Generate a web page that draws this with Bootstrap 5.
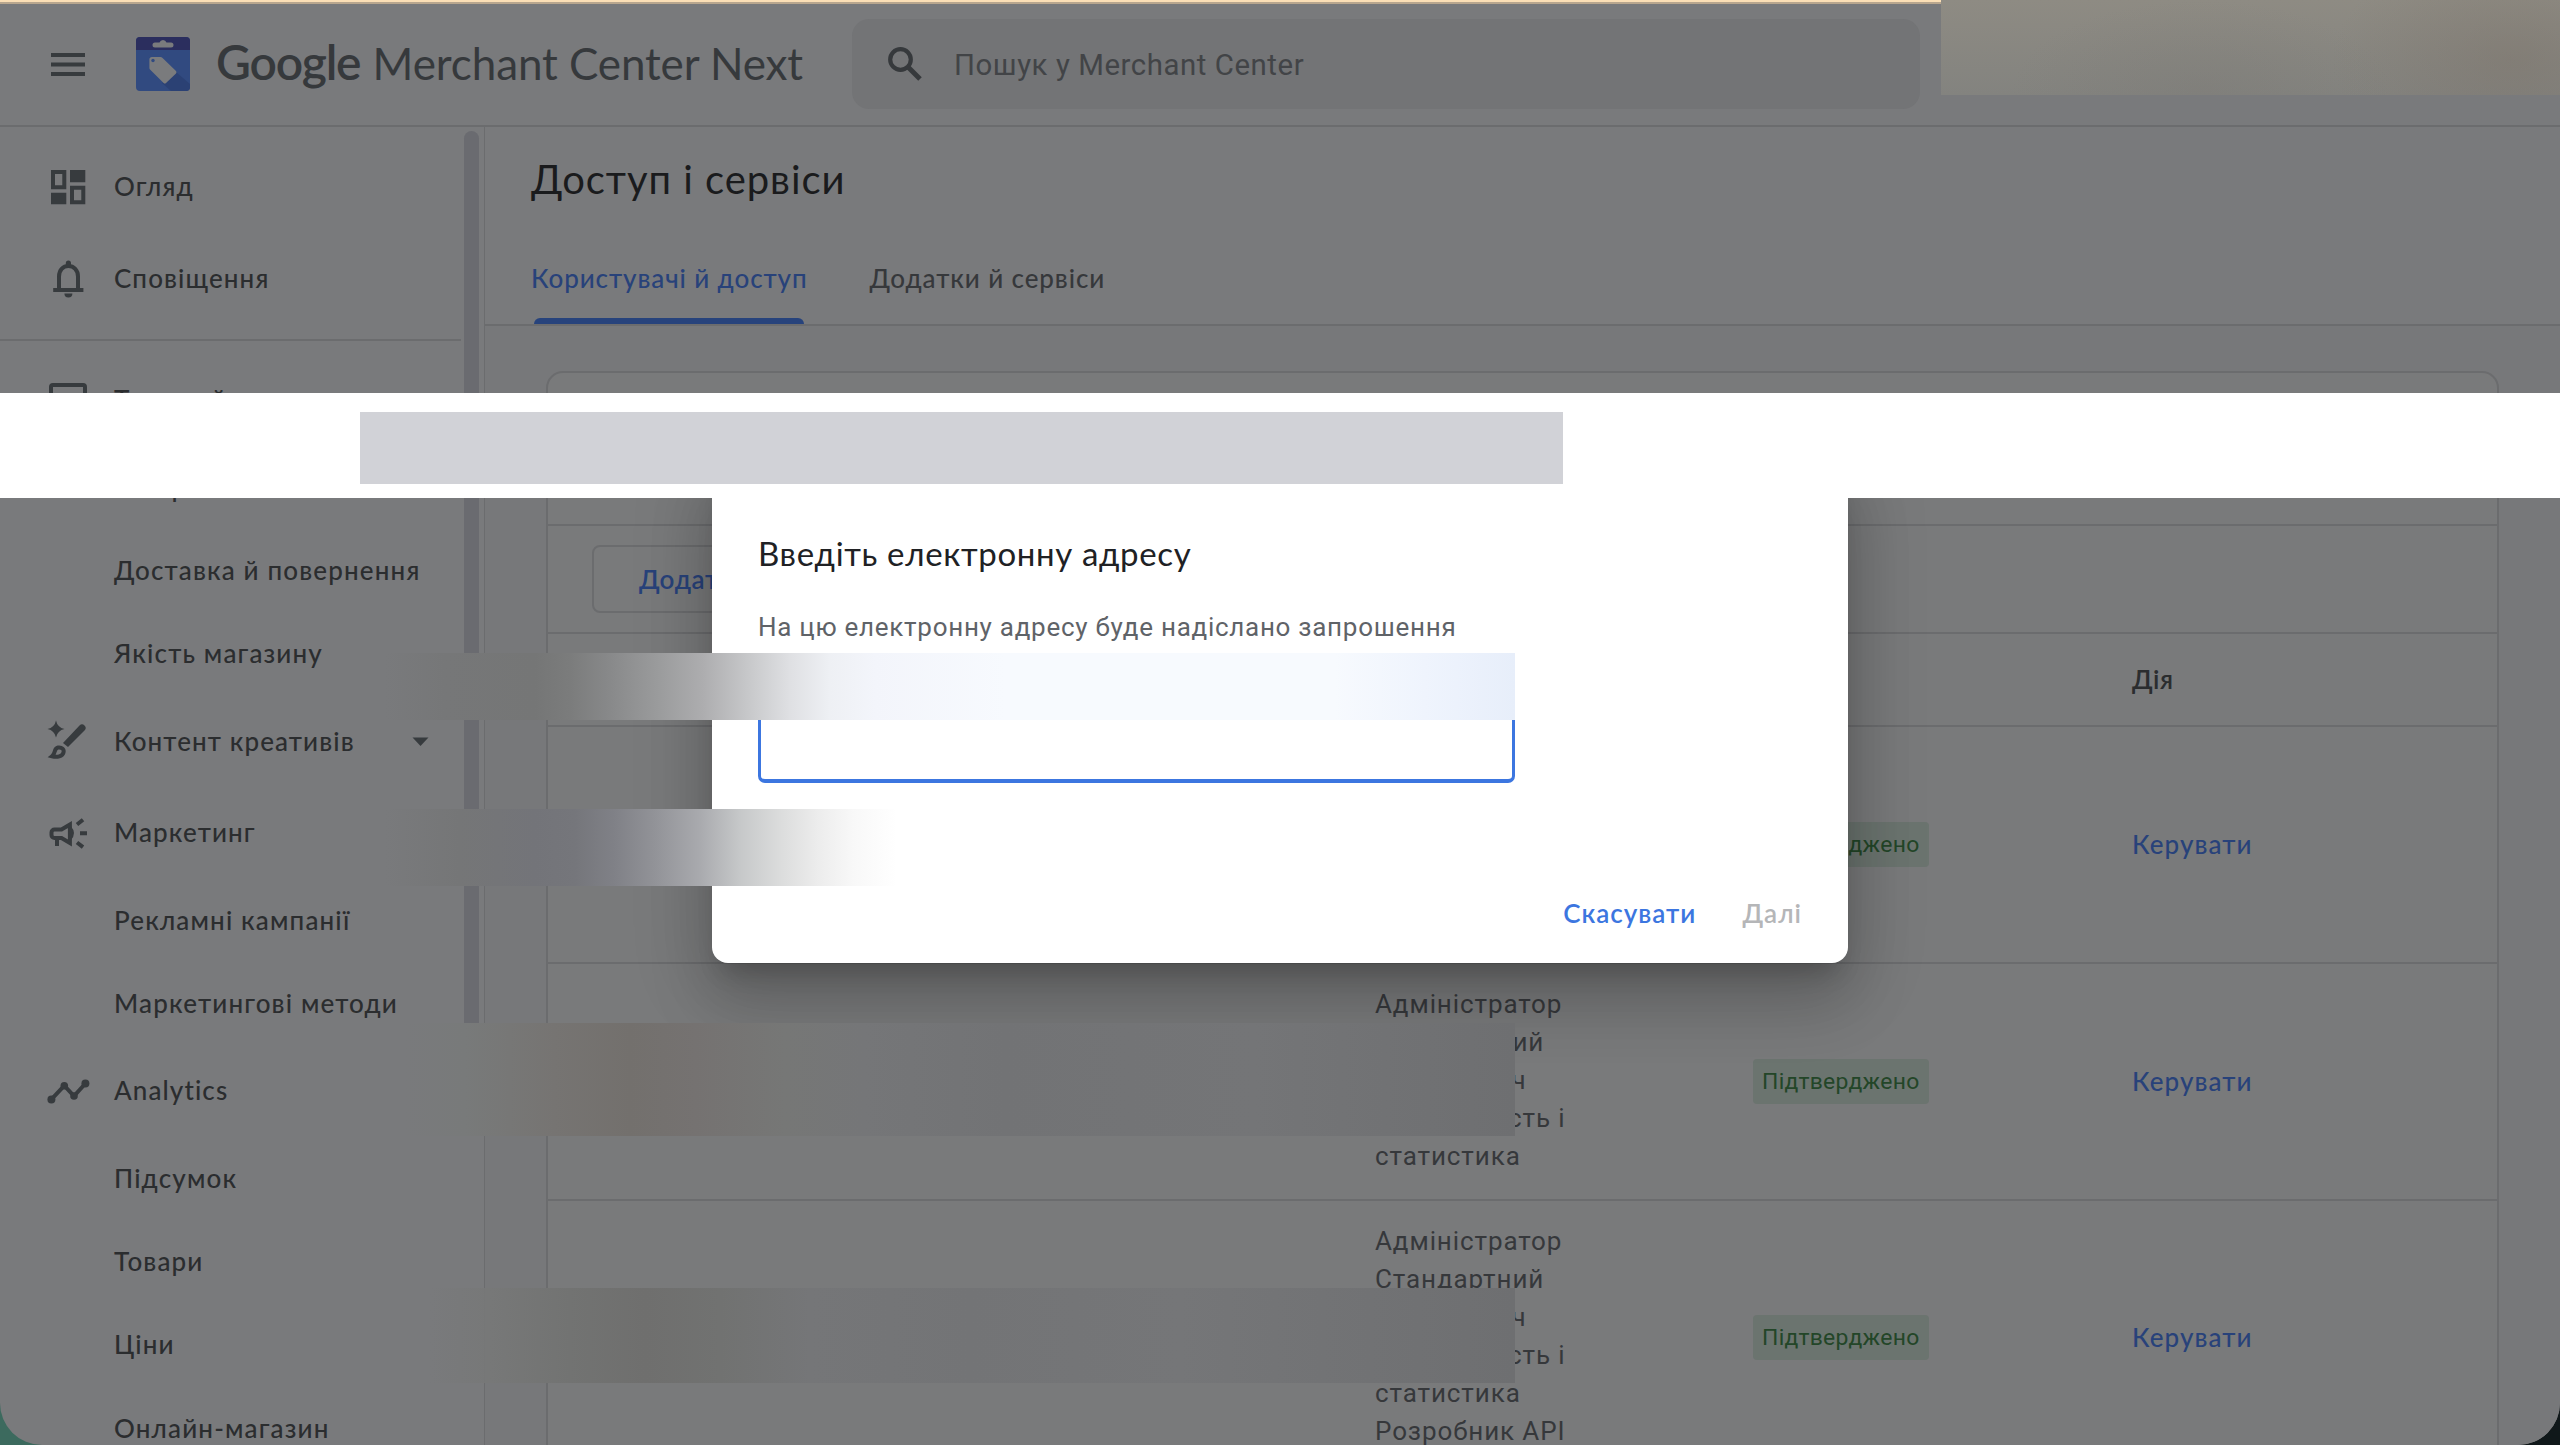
<!DOCTYPE html>
<html lang="uk">
<head>
<meta charset="utf-8">
<meta name="viewport" content="width=device-width, initial-scale=1">
<title>Merchant Center Next</title>
<link href="https://cdn.jsdelivr.net/npm/bootstrap@5.3.0/dist/css/bootstrap.min.css" rel="stylesheet">
<style>
  :root { --dim: #797a7c; --rule: #6b6c6e; --ink: #2b2d2f; --glyph: #373b3e; --blue: #28427a; }
  html, body { height: 1445px; overflow: hidden; }
  body { font-family: Lato, "Open Sans", sans-serif; font-size: 26px; color: var(--ink);
         background: linear-gradient(90deg, #3c6a5e 0, #3c6a5e 50%, #10181a 50%); }
  .app-window { width: 2560px; height: 1445px; background: var(--dim); border-radius: 0 0 42px 42px; }
  .roboto { font-family: Roboto, sans-serif; }

  .top-strip { height: 4px; background: linear-gradient(#fbdfb6 50%, #b8a68e 50%); }
  .app-header { height: 123px; border-bottom: 2px solid var(--rule); padding: 0 0 0 51px; }
  .wordmark { font-size: 44px; line-height: 1; color: #36393c; letter-spacing: -.1px; margin: 0 0 5px 26px; width: 636px; white-space: nowrap; }
  .wordmark b { font-size: 48px; font-weight: 600; letter-spacing: -1.2px; margin-right: 1px; }
  .search-box { width: 1068px; height: 90px; margin-bottom: 1px; border-radius: 17px; background: #737476; padding-left: 36px; color: #424447;
                font-size: 29.4px; letter-spacing: .55px; }
  .search-box span { padding-top: 2px; }

  .side { width: 485px; height: 1318px; border-right: 1.6px solid var(--rule); padding-top: 14.2px; }
  .side-item { height: 91.4px; padding-left: 46px; letter-spacing: 1.1px; font-weight: 500; }
  .side-item svg { width: 44px; height: 44px; margin-right: 24px; flex: none; }
  .side-sub { height: 83.4px; padding-left: 114px; letter-spacing: 1.15px; font-weight: 500; }
  .side-rule { width: 461px; height: 2px; background: var(--rule); margin: 15px 0 13px; }
  .side-scroll { left: 464px; top: 131px; width: 15px; height: 892px; border-radius: 8px 8px 0 0; background: #6a6b70; }
  .g-line { fill: none; stroke: var(--glyph); stroke-width: 4; }
  .g-fill { fill: var(--glyph); }

  .page-title { font-size: 40px; font-weight: 400; height: 103px; line-height: 105px; letter-spacing: .95px; color: #1a1b1d; padding-left: 46px; margin: 0; }
  .tab-row { height: 96px; padding-left: 46px; gap: 62px; border-bottom: 2px solid var(--rule); font-weight: 500; letter-spacing: .9px; color: #36383b; }
  .tab-row > div { line-height: 97px; height: 94px; position: relative; white-space: nowrap; }
  .tab-row .current { color: var(--blue); }
  .tab-row .current::after { content: ""; position: absolute; left: 3px; right: 4px; bottom: 0; height: 6px; border-radius: 6px 6px 0 0; background: #27437c; }
  .page-body { background: #77787a; padding: 45px 61px 0; height: 1122px; }
  .users-card { border: 2px solid var(--rule); border-radius: 17px; background: #797a7b; height: 1200px; }
  .card-top { height: 153px; border-bottom: 2px solid var(--rule); }
  .card-tools { height: 108px; border-bottom: 2px solid var(--rule); padding: 19px 0 0 44px; }
  .add-btn { height: 68px; border: 2px solid var(--rule); border-radius: 8px; color: #28427a; font-weight: 600; padding: 0 45px; letter-spacing: .6px; line-height: 64px; }
  .users-head { height: 93px; border-bottom: 2px solid var(--rule); font-weight: 600; letter-spacing: .6px; }
  .users-row { border-bottom: 2px solid var(--rule); }
  .c-user { width: 827px; } .c-role { width: 378px; } .c-state { width: 379px; } .c-act { width: 240px; }
  .c-role { font-size: 26px; line-height: 37.95px; letter-spacing: .9px; color: #36383b; }
  .state-tag { background: #6b746f; color: #234628; border-radius: 4px; font-size: 22.9px; letter-spacing: .3px; height: 45px; line-height: 45px; padding: 0 9px; }
  .act-link { color: var(--blue); font-weight: 500; letter-spacing: 1.1px; }

  .invite { left: 712px; top: 460px; width: 1136px; height: 502.6px; border-radius: 16px; background: #fff; padding: 71px 46px 0;
            box-shadow: 0 18px 25px -11px rgba(0,0,0,.2), 0 39px 62px 5px rgba(0,0,0,.14), 0 15px 75px 13px rgba(0,0,0,.12); }
  .invite h2 { font-size: 33px; line-height: 44px; font-weight: 400; letter-spacing: .65px; color: #202124; margin: 0 0 32px; }
  .invite p { font-size: 26px; line-height: 40px; letter-spacing: .72px; color: #5f6368; margin: 0 0 43px; }
  .invite .mail-field { width: 757px; height: 93px; border: solid #3c76e0; border-width: 3px 3px 4px; border-radius: 7px; }
  .invite .choices { margin-top: 110px; line-height: 40px; font-weight: 600; gap: 46px; letter-spacing: 1px; }

  .band { left: 0; top: 393px; width: 2560px; height: 105px; background: #fff; padding: 19px 0 0 360px; }
  .band div { width: 1203px; height: 72px; background: #d1d2d7; }
  .smear { position: absolute; }
  .smear-a { left: 385px; top: 653px; width: 1130px; height: 66.5px;
    background: linear-gradient(90deg, rgba(118,119,120,0) 0, #767778 60px, #757676 150px, #7b7c7c 185px, #88898a 225px, #9b9c9d 275px, #adadaf 318px, #c8c9cb 365px, #dfe0e3 405px, #eef0f4 445px, #f3f5fb 490px, #f7fafe 620px, #f7fafe 950px, #eff4fd 1040px, #e7eefa 1130px); }
  .smear-b { left: 385px; top: 809px; width: 515px; height: 76.5px;
    background: linear-gradient(90deg, rgba(118,119,120,0) 0, #757677 75px, #737479 150px, #75767b 190px, #808187 230px, #929398 270px, #a9aaae 315px, #c6c8c9 355px, #dbdcdc 395px, #ececec 432px, #f8f8f8 468px, #fff 512px); }
  .smear-c { left: 405px; top: 1022.7px; width: 1110px; height: 113.5px;
    background: linear-gradient(90deg, rgba(121,122,123,0) 0, #787a7a 60px, #767472 150px, #73706d 225px, #757271 290px, #767776 380px, #757678 460px, #727375 600px, #747577 850px, #6e6f71 1110px); }
  .smear-d { left: 430px; top: 1287.7px; width: 1085px; height: 95px;
    background: linear-gradient(90deg, rgba(121,122,123,0) 0, #777878 60px, #727372 140px, #6f6f6e 215px, #717271 290px, #757678 380px, #737476 540px, #757678 750px, #6e6f71 1085px); }
  .smear-e { left: 1941px; top: 0; width: 619px; height: 95px;
    background: radial-gradient(ellipse 180px 110px at 570px 60px, rgba(122,112,102,.4), rgba(122,112,102,0)), radial-gradient(ellipse 190px 90px at 260px 90px, rgba(122,120,116,.35), rgba(122,120,116,0)), linear-gradient(#8e8b83, #83837f); }
</style>
</head>
<body>
<div class="app-window position-relative overflow-hidden">
  <div class="top-strip"></div>
  <header class="app-header d-flex align-items-center">
    <svg width="34" height="24" viewBox="0 0 34 24" style="margin-top:1px"><path class="g-fill" d="M0 0h34v4H0zM0 9.6h34v4H0zM0 19h34v4H0z"/></svg>
    <svg width="54" height="54" viewBox="0 0 54 54" style="margin-left:51px;margin-bottom:1px">
      <rect width="54" height="54" rx="4" fill="#314a80"/>
      <path d="M40 35 26 46l9 8h15a4 4 0 0 0 4-4V47z" fill="#2b4174"/>
      <path d="M0 13V4a4 4 0 0 1 4-4h46a4 4 0 0 1 4 4v9z" fill="#2b2e5e"/>
      <path d="M19 5.5h4.500a3.700 3.700 0 0 1 7 0H35a2.200 2.200 0 0 1 0 5H19a2.200 2.200 0 0 1 0-5z" fill="#7a7b7d"/>
      <path d="M16 20h8.500q1 0 1.800.8L40 34q1 1.200 0 2.400L30 46q-1.200 1-2.400 0L14 32.500q-.6-.7-.6-1.600V22.500q0-2.500 2.600-2.500z" fill="#7a7b7d"/>
      <circle cx="17" cy="23.500" r="1.700" fill="#314a80"/>
    </svg>
    <div class="wordmark"><b>Google</b> Merchant Center Next</div>
    <div class="search-box roboto d-flex align-items-center">
      <svg width="34" height="34" viewBox="0 0 34 34" style="margin-right:32px"><circle cx="12.500" cy="12.500" r="10.300" fill="none" stroke="#36393c" stroke-width="4.200"/><path d="M20 20 32 32" stroke="#36393c" stroke-width="5"/></svg>
      <span>Пошук у Merchant Center</span>
    </div>
  </header>

  <div class="d-flex">
    <nav class="side flex-shrink-0">
      <div class="side-item d-flex align-items-center">
        <svg viewBox="0 0 44 44"><path class="g-line" d="M7 7h11.300v15.300H7zM26 22.700h11.300v14.600H26z"/><path class="g-fill" d="M24 5h15.300v12.300H24zM5 27.700h15.300v11.600H5z"/></svg><span>Огляд</span></div>
      <div class="side-item d-flex align-items-center">
        <svg viewBox="0 0 44 44"><path class="g-line" d="M13 33V20.500C13 14 17 10 22.400 10S32 14 32 20.500V33"/><path class="g-fill" d="M7.200 32h30.200v4H7.200zM19.800 11V7.200a2.600 2.600 0 0 1 5.200 0V11zM18.400 37.500h8a4 4 0 0 1-8 0z"/></svg><span>Сповіщення</span></div>
      <div class="side-rule"></div>
      <div class="side-item d-flex align-items-center">
        <svg viewBox="0 0 44 44"><rect class="g-line" x="5" y="7" width="34" height="30" rx="2"/></svg><span>Товари й магазин</span></div>
      <div class="side-sub d-flex align-items-center"><span>Товари</span></div>
      <div class="side-sub d-flex align-items-center"><span>Доставка й повернення</span></div>
      <div class="side-sub d-flex align-items-center"><span>Якість магазину</span></div>
      <div class="side-item d-flex align-items-center">
        <svg viewBox="0 0 44 44"><path class="g-fill" d="M10 1.500Q11.500 8.500 18.500 10 11.500 11.500 10 18.500 8.500 11.500 1.500 10 8.500 8.500 10 1.500zM17 24 33.500 6.500a3.500 3.500 0 0 1 5 5L22 28z"/><path class="g-line" d="M6 37.300C10 34 7.500 29.500 12 28.500c4-.6 6.300 2 5.500 5-.9 4-6.500 5-11.500 3.800z"/></svg><span>Контент креативів</span>
        <svg viewBox="0 0 44 44" style="margin:0 0 0 43px"><path class="g-fill" d="M14.500 18.500h16l-8 8.500z"/></svg></div>
      <div class="side-item d-flex align-items-center">
        <svg viewBox="0 0 44 44"><path class="g-line" d="M8.500 18.500h7l8.400-5v18.500l-8.400-5h-7a3 3 0 0 1-3-3V21.500a3 3 0 0 1 3-3z"/><path class="g-fill" d="M9 27h4v8H9zM25 15.500q6 6.500 0 13.500z"/><path class="g-line" d="m31 13.500 6-4.700M34 22.300h7M31 31.500l6 4.600"/></svg><span>Маркетинг</span></div>
      <div class="side-sub d-flex align-items-center"><span>Рекламні кампанії</span></div>
      <div class="side-sub d-flex align-items-center"><span>Маркетингові методи</span></div>
      <div class="side-item d-flex align-items-center">
        <svg viewBox="0 0 44 44"><path class="g-line" d="M5.400 30.400 18.300 16.700 28 27 39.400 14.500"/><g class="g-fill"><circle cx="5.400" cy="30.400" r="4"/><circle cx="18.300" cy="16.700" r="3.800"/><circle cx="28" cy="27" r="3.800"/><circle cx="39.400" cy="14.500" r="4"/></g></svg><span>Analytics</span></div>
      <div class="side-sub d-flex align-items-center"><span>Підсумок</span></div>
      <div class="side-sub d-flex align-items-center"><span>Товари</span></div>
      <div class="side-sub d-flex align-items-center"><span>Ціни</span></div>
      <div class="side-sub d-flex align-items-center"><span>Онлайн-магазин</span></div>
    </nav>

    <main class="flex-grow-1">
      <h1 class="page-title">Доступ і сервіси</h1>
      <div class="tab-row d-flex"><div class="current">Користувачі й доступ</div><div>Додатки й сервіси</div></div>
      <div class="page-body">
        <div class="users-card">
          <div class="card-top"></div>
          <div class="card-tools d-flex"><div class="add-btn">Додати</div></div>
          <div class="users-head d-flex align-items-center"><div class="c-user"></div><div class="c-role"></div><div class="c-state"></div><div class="c-act">Дія</div></div>
          <div class="users-row d-flex align-items-center" style="height:236.500px">
            <div class="c-user"></div><div class="c-role"></div>
            <div class="c-state d-flex"><div class="state-tag roboto">Підтверджено</div></div><div class="c-act act-link">Керувати</div>
          </div>
          <div class="users-row d-flex align-items-center" style="height:237.200px">
            <div class="c-user"></div>
            <div class="c-role roboto">Адміністратор<br>Стандартний<br>Користувач<br>Ефективність і<br>статистика</div>
            <div class="c-state d-flex"><div class="state-tag roboto">Підтверджено</div></div><div class="c-act act-link">Керувати</div>
          </div>
          <div class="users-row d-flex align-items-center" style="height:275px">
            <div class="c-user"></div>
            <div class="c-role roboto">Адміністратор<br>Стандартний<br>Користувач<br>Ефективність і<br>статистика<br>Розробник API</div>
            <div class="c-state d-flex"><div class="state-tag roboto">Підтверджено</div></div><div class="c-act act-link">Керувати</div>
          </div>
        </div>
      </div>
    </main>
  </div>

  <div class="side-scroll position-absolute"></div>

  <div class="invite position-absolute">
    <h2>Введіть електронну адресу</h2>
    <p class="roboto">На цю електронну адресу буде надіслано запрошення</p>
    <div class="mail-field"></div>
    <div class="choices d-flex justify-content-end"><span style="color:#3c76e0">Скасувати</span><span style="color:#b5b6b8">Далі</span></div>
  </div>

  <div class="smear smear-a"></div>
  <div class="smear smear-b"></div>
  <div class="smear smear-c"></div>
  <div class="smear smear-d"></div>
  <div class="smear smear-e"></div>
  <div class="band position-absolute"><div></div></div>
</div>
<script src="https://cdn.jsdelivr.net/npm/bootstrap@5.3.0/dist/js/bootstrap.bundle.min.js"></script>
</body>
</html>
